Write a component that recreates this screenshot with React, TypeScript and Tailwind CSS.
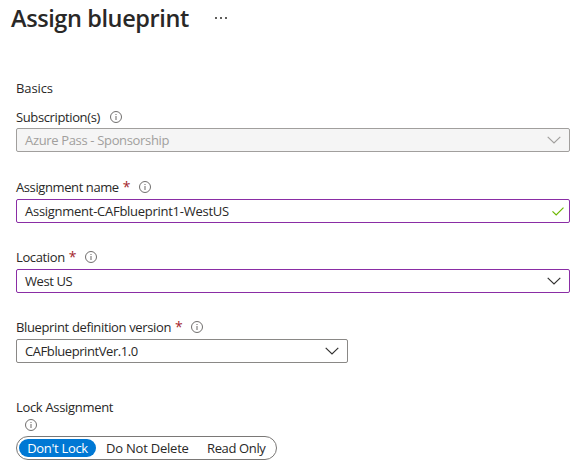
import type { ReactNode } from "react";

function InfoIcon() {
  return (
    <svg width="12" height="12" viewBox="0 0 12 12" fill="none" className="shrink-0">
      <circle cx="6" cy="6" r="5.5" stroke="#605e5c" strokeWidth="0.9" />
      <path d="M6 5v4" stroke="#777574" strokeWidth="1.1" />
      <path d="M6 3v1" stroke="#777574" strokeWidth="1.1" />
    </svg>
  );
}

function Chevron({ color }: { color: string }) {
  return (
    <svg width="14" height="8" viewBox="0 0 14 8" fill="none" className="shrink-0">
      <path d="M0.7 0.9L7 7L13.3 0.9" stroke={color} strokeWidth="1.2" />
    </svg>
  );
}

function Label({ text, spacing, required }: { text: string; spacing: string; required?: boolean }) {
  return (
    <div className="flex h-4 items-center">
      <span className={`whitespace-nowrap ${spacing}`}>{text}</span>
      {required && <span className="ml-[4px] w-[6px] text-sm leading-4 text-[#a4262c]">*</span>}
      <span className="ml-[10px]">
        <InfoIcon />
      </span>
    </div>
  );
}

function Field({ tone, children }: { tone: string; children: ReactNode }) {
  return (
    <div className={`flex h-6 items-center justify-between rounded-[2px] border pl-2 ${tone}`}>
      {children}
    </div>
  );
}

export default function App() {
  return (
    <main className="h-[476px] w-[580px] overflow-hidden bg-white pr-[10px] pl-4 font-['Open_Sans','Noto_Sans',sans-serif] text-[13px] leading-4 text-[#292827]">
      <header className="-ml-[5px] flex h-9 items-center">
        <h1 className="w-[179px] text-[23.5px] leading-9 font-semibold tracking-[-0.4px] whitespace-nowrap">Assign blueprint</h1>
        <svg width="12" height="2" viewBox="0 0 12 2" fill="#605e5c" className="ml-[25px]">
          <rect x="0" width="2" height="2" />
          <rect x="5" width="2" height="2" />
          <rect x="10" width="2" height="2" />
        </svg>
      </header>

      <h2 className="mt-11 h-4 tracking-[-0.1px]">Basics</h2>

      <section className="mt-[13px] flex flex-col gap-[3px]">
        <Label text="Subscription(s)" spacing="tracking-[-0.38px]" />
        <Field tone="border-[#a19f9d] bg-[#f5f5f5] text-[#a19f9d] pr-[8px]">
          <span className="tracking-[-0.34px]">Azure Pass - Sponsorship</span>
          <Chevron color="#a19f9d" />
        </Field>
      </section>

      <section className="mt-[27px] flex flex-col gap-1">
        <Label text="Assignment name" spacing="tracking-[-0.4px]" required />
        <Field tone="border-[#8a2da5] pr-[5px]">
          <span className="tracking-[-0.27px]">Assignment-CAFblueprint1-WestUS</span>
          <svg width="12" height="9" viewBox="0 0 12 9" fill="none">
            <path d="M0.5 4.3L4.2 8L11.5 0.7" stroke="#6bb700" strokeWidth="1.2" />
          </svg>
        </Field>
      </section>

      <section className="mt-[26px] flex flex-col gap-1">
        <Label text="Location" spacing="tracking-[-0.38px]" required />
        <Field tone="border-[#8a2da5] pr-[8px]">
          <span className="tracking-[-0.4px]">West US</span>
          <Chevron color="#323130" />
        </Field>
      </section>

      <section className="mt-[26px] flex w-[332px] flex-col gap-1">
        <Label text="Blueprint definition version" spacing="tracking-[-0.36px]" required />
        <Field tone="border-[#8a8886] pr-[8px]">
          <span className="tracking-[-0.42px]">CAFblueprintVer.1.0</span>
          <Chevron color="#323130" />
        </Field>
      </section>

      <section className="mt-9">
        <div className="h-4 tracking-[-0.32px]">Lock Assignment</div>
        <div className="mt-1 ml-[9px] h-3">
          <InfoIcon />
        </div>
        <div className="mt-[5px] flex h-6 w-[261px] items-center rounded-full border border-[#7a7876] pl-[2px]">
          <span className="flex h-[18px] w-[77px] items-center justify-center rounded-full bg-[#0078d4] tracking-[-0.3px] text-white">
            Don't Lock
          </span>
          <span className="ml-[10px] w-[101px] tracking-[-0.22px] whitespace-nowrap">Do Not Delete</span>
          <span className="tracking-[-0.36px] whitespace-nowrap">Read Only</span>
        </div>
      </section>
    </main>
  );
}
